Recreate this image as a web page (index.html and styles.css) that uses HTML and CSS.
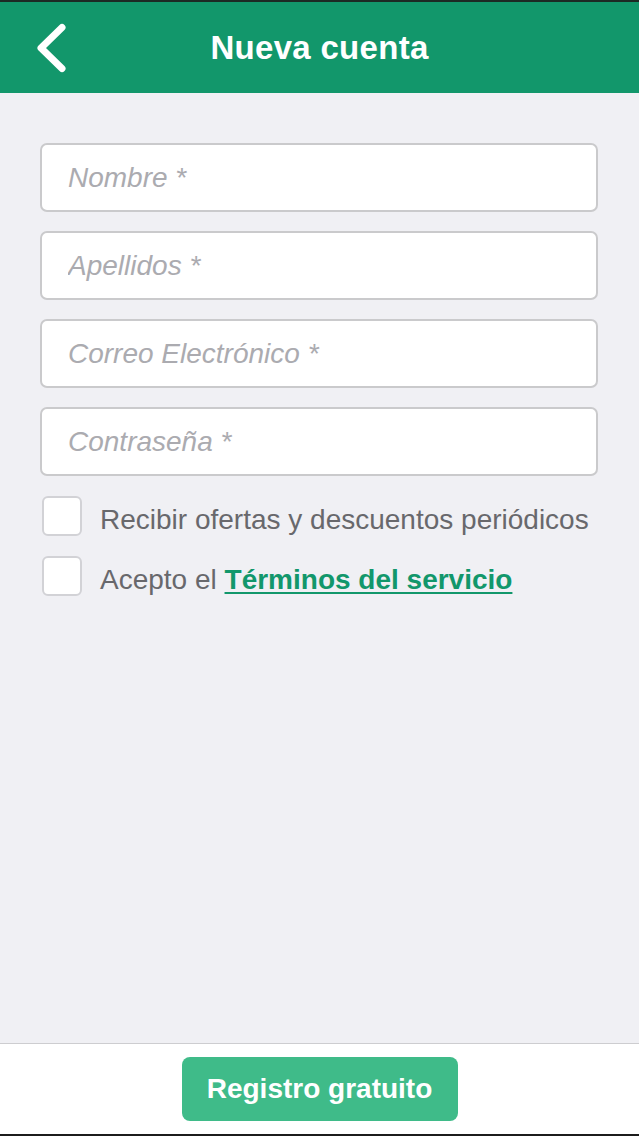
FILE: index.html
```html
<!DOCTYPE html>
<html lang="es">
<head>
<meta charset="utf-8">
<title>Nueva cuenta</title>
<link rel="stylesheet" href="styles.css">
</head>
<body>
<div class="app">
  <header class="topbar">
    <button class="back" aria-label="Volver">
      <svg width="34" height="56" viewBox="0 0 34 56">
        <path d="M26 7.5 L5 28 L26 48.5" fill="none" stroke="#fff" stroke-width="7" stroke-linecap="round" stroke-linejoin="round"/>
      </svg>
    </button>
    <h1 class="title">Nueva cuenta</h1>
  </header>
  <main class="form">
    <div class="fields">
      <input class="field" type="text" placeholder="Nombre *">
      <input class="field" type="text" placeholder="Apellidos *">
      <input class="field" type="email" placeholder="Correo Electrónico *">
      <input class="field" type="password" placeholder="Contraseña *">
    </div>
    <div class="checks">
      <label class="check"><span class="box"></span><span class="label">Recibir ofertas y descuentos periódicos</span></label>
      <label class="check"><span class="box"></span><span class="label">Acepto el <a class="terms" href="#">Términos del servicio</a></span></label>
    </div>
  </main>
  <footer class="footer">
    <button class="submit">Registro gratuito</button>
  </footer>
</div>
</body>
</html>
```
FILE: styles.css
```css
* { box-sizing: border-box; }
html, body { margin: 0; padding: 0; }
body {
  font-family: "Liberation Sans", Arial, sans-serif;
  background: #f0f0f4;
}
.app {
  width: 639px;
  height: 1136px;
  display: flex;
  flex-direction: column;
}
.topbar {
  height: 93px;
  border-top: 2px solid #1c2a24;
  background: #12976b;
  display: flex;
  align-items: center;
  justify-content: center;
  position: relative;
  flex-shrink: 0;
}
.back {
  position: absolute;
  left: 36px;
  top: 18px;
  background: none;
  border: 0;
  padding: 0;
  width: 34px;
  height: 56px;
  cursor: pointer;
}
.back svg { display: block; }
.title {
  margin: 0;
  color: #fff;
  font-size: 33px;
  font-weight: bold;
  letter-spacing: 0.3px;
  margin-top: 0;
}
.form {
  flex: 1;
  padding: 50px 41px 0 40px;
}
.fields {
  display: flex;
  flex-direction: column;
  gap: 19px;
}
.field {
  height: 69px;
  width: 100%;
  border: 2px solid #cacacc;
  border-radius: 7px;
  background: #fff;
  padding: 0 26px;
  font-family: "Liberation Sans", Arial, sans-serif;
  font-size: 28px;
  font-style: italic;
  color: #555;
  outline: none;
}
.field::placeholder {
  color: #ababb0;
  font-style: italic;
}
.checks {
  margin-top: 20px;
  padding-left: 2px;
  display: flex;
  flex-direction: column;
  gap: 20px;
}
.check {
  display: flex;
  align-items: center;
  gap: 18px;
  height: 40px;
}
.box {
  width: 40px;
  height: 40px;
  background: #fff;
  border: 2px solid #d2d2d6;
  border-radius: 6px;
  flex-shrink: 0;
}
.label {
  font-size: 28px;
  color: #68686c;
  white-space: nowrap;
  margin-top: 7px;
}
.terms {
  color: #12976b;
  font-weight: bold;
  text-decoration: underline;
  text-decoration-thickness: 2px;
  text-underline-offset: 3px;
}
.footer {
  height: 93px;
  background: #fff;
  border-top: 1px solid #cdcdd0;
  border-bottom: 2px solid #1c1c1c;
  display: flex;
  justify-content: center;
  align-items: flex-start;
  padding-top: 13px;
  flex-shrink: 0;
}
.submit {
  width: 276px;
  height: 64px;
  border: 0;
  border-radius: 8px;
  background: #3fbb89;
  color: #fff;
  font-family: "Liberation Sans", Arial, sans-serif;
  font-size: 28px;
  font-weight: bold;
  cursor: pointer;
}
```
